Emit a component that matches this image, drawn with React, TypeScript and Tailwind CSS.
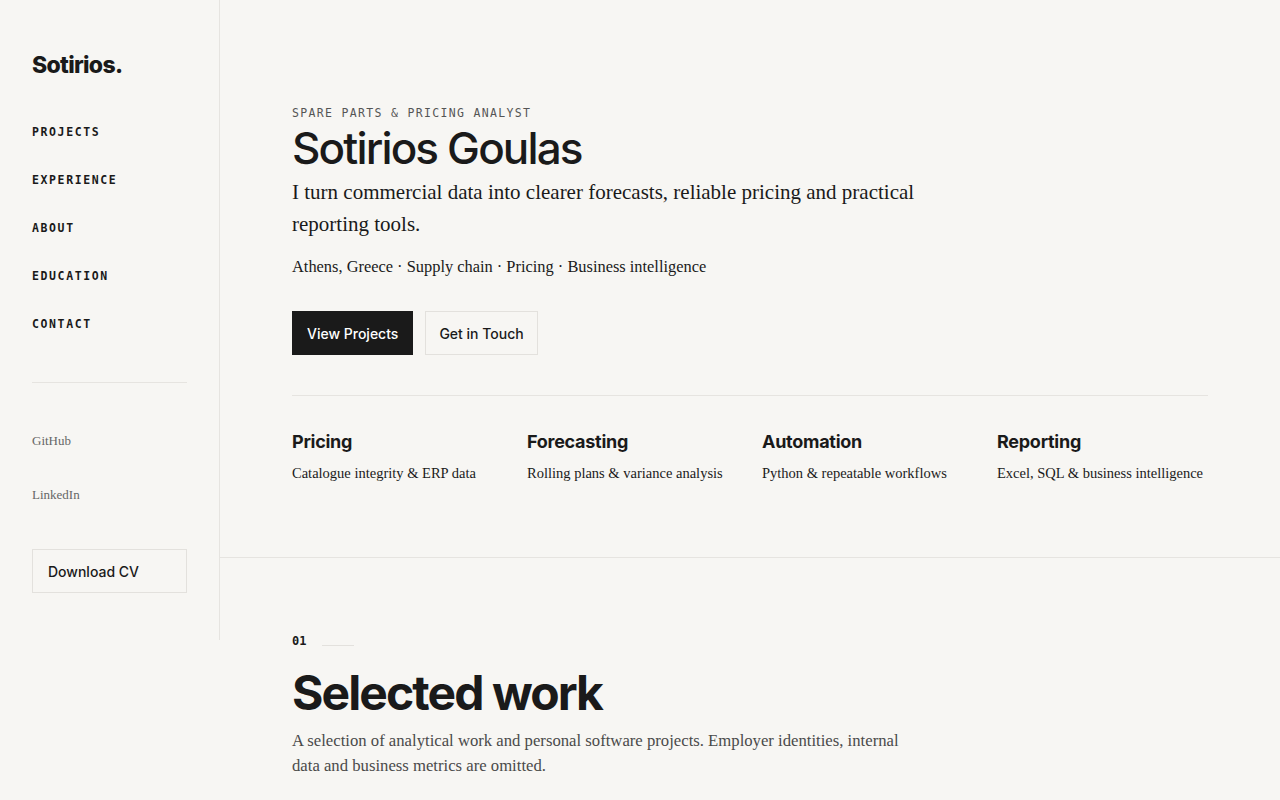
const sans = "font-['Inter','Liberation_Sans',sans-serif]";
const serif = "font-['Liberation_Serif','DejaVu_Serif',serif]";
const mono = "font-['DejaVu_Sans_Mono','Liberation_Mono',monospace]";

const nav = ['Projects', 'Experience', 'About', 'Education', 'Contact'];

const skills = [
  { title: 'Pricing', text: 'Catalogue integrity & ERP data' },
  { title: 'Forecasting', text: 'Rolling plans & variance analysis' },
  { title: 'Automation', text: 'Python & repeatable workflows' },
  { title: 'Reporting', text: 'Excel, SQL & business intelligence' },
];

export default function App() {
  return (
    <div className={`flex min-h-screen bg-[#f7f6f3] text-[#1a1a1a] ${sans}`}>
      <aside className="flex h-[640px] w-[220px] shrink-0 flex-col border-r border-[#e6e4e0] px-8 pt-[52px]">
        <a href="#" className="text-[23px] font-extrabold leading-[26px] tracking-[-0.03em]">
          Sotirios.
        </a>

        <nav className="mt-[46px] flex flex-col gap-[32px]">
          {nav.map((item) => (
            <a
              key={item}
              href="#"
              className={`${mono} text-[11.5px] font-bold uppercase leading-4 tracking-[0.14em]`}
            >
              {item}
            </a>
          ))}
        </nav>

        <div className="mt-[50px] border-t border-[#e6e4e0]" />

        <div className="mt-[50px] flex flex-col gap-[38px]">
          <a href="#" className={`${serif} text-[13px] leading-4 text-[#666]`}>GitHub</a>
          <a href="#" className={`${serif} text-[13px] leading-4 text-[#666]`}>LinkedIn</a>
        </div>

        <a
          href="#"
          className="mt-[46px] flex h-[44px] items-center border border-[#e3e1dd] px-[15px] text-[14px] font-medium"
        >
          Download CV
        </a>
      </aside>

      <main className="flex-1">
        <section className="border-b border-[#e6e4e0] px-[72px] pb-[74px] pt-[106px]">
          <p className={`${mono} text-[11.5px] uppercase leading-[14px] tracking-[0.115em] text-[#555]`}>
            Spare parts &amp; pricing analyst
          </p>
          <h1 className="mt-[2px] text-[44px] font-medium leading-[52px] tracking-[-0.042em]">
            Sotirios Goulas
          </h1>
          <p className={`${serif} mt-[2px] max-w-[660px] text-[21px] leading-[32px]`}>
            I turn commercial data into clearer forecasts, reliable pricing and practical reporting tools.
          </p>
          <p className={`${serif} mt-[15px] text-[16.4px] leading-6`}>
            Athens, Greece · Supply chain · Pricing · Business intelligence
          </p>

          <div className="mt-[32px] flex gap-3">
            <a
              href="#"
              className="flex h-[44px] items-center bg-[#1a1a1a] px-[15px] text-[14px] font-medium text-white"
            >
              View Projects
            </a>
            <a
              href="#"
              className="flex h-[44px] items-center border border-[#e3e1dd] px-[13px] text-[14px] font-medium"
            >
              Get in Touch
            </a>
          </div>

          <div className="mt-[40px] grid grid-cols-4 gap-6 border-t border-[#e6e4e0] pt-[34px]">
            {skills.map((s) => (
              <div key={s.title}>
                <h3 className="text-[18px] font-bold leading-6 tracking-[-0.015em]">{s.title}</h3>
                <p className={`${serif} mt-[9px] text-[14.5px] leading-5`}>{s.text}</p>
              </div>
            ))}
          </div>
        </section>

        <section className="px-[72px] pt-[75px]">
          <div className="flex items-center gap-4">
            <span className={`${mono} text-[12px] font-bold leading-4`}>01</span>
            <span className="mt-[8px] h-px w-8 bg-[#e3e1dd]" />
          </div>
          <h2 className="mt-[16px] text-[48px] font-bold leading-[56px] tracking-[-0.04em]">
            Selected work
          </h2>
          <p className={`${serif} mt-[7px] max-w-[620px] text-[16.7px] leading-[25px] text-[#4a4a4a]`}>
            A selection of analytical work and personal software projects. Employer identities, internal data and
            business metrics are omitted.
          </p>
        </section>
      </main>
    </div>
  );
}
